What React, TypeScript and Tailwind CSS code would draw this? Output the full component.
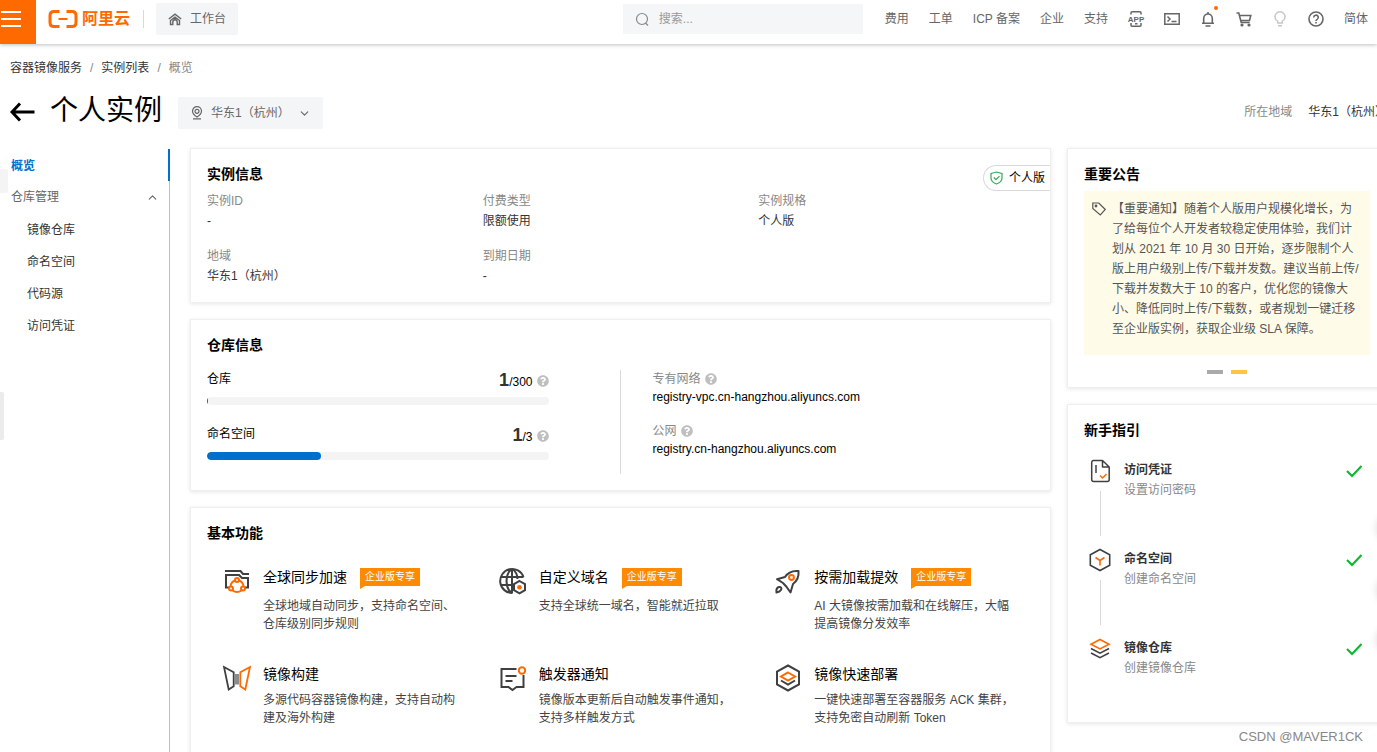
import type { ReactNode } from 'react';
import { FaQuestionCircle } from 'react-icons/fa';
import { ChevronDown, ChevronUp } from 'lucide-react';

const NAV_LINKS = ['费用', '工单', 'ICP 备案', '企业', '支持'];
const SIDE_LINKS = ['镜像仓库', '命名空间', '代码源', '访问凭证'];

const INSTANCE_INFO = [
    { label: '实例ID', value: '-' },
    { label: '付费类型', value: '限额使用' },
    { label: '实例规格', value: '个人版' },
    { label: '地域', value: '华东1（杭州）' },
    { label: '到期日期', value: '-' },
];

const QUOTAS = [
    { label: '仓库', used: 1, total: 300 },
    { label: '命名空间', used: 1, total: 3 },
];

const ENDPOINTS = [
    { label: '专有网络', host: 'registry-vpc.cn-hangzhou.aliyuncs.com' },
    { label: '公网', host: 'registry.cn-hangzhou.aliyuncs.com' },
];

interface Feature {
    title: string;
    desc: string;
    icon: ReactNode;
    enterprise?: boolean;
}

interface Step {
    title: string;
    desc: string;
    icon: ReactNode;
}

/* ---------- icons ---------- */

const SyncIcon = () => (
    <svg width="28" height="28" viewBox="0 0 28 28" fill="none" stroke="#404040" strokeWidth="2">
        <path d="M2 4h15.500l2.500 3H26" />
        <path d="M6 20.500H3V8h13l3 3h6v9.500h-3" />
        <g stroke="#ff6a00">
            <path d="M12 13.500a7 7 0 0 0-4.500 5.500M16 13.500a7 7 0 0 1 4.500 5.500M9.500 23.500q4.500 3 9 0" />
            <circle cx="14" cy="13" r="2" />
            <circle cx="8" cy="21.500" r="2" />
            <circle cx="20" cy="21.500" r="2" />
        </g>
    </svg>
);

const GlobeIcon = () => (
    <svg width="28" height="28" viewBox="0 0 28 28" fill="none" stroke="#404040" strokeWidth="2">
        <path d="M24.500 10A12 12 0 1 0 13.500 26M2 10h22.500M2 18h11M12.500 2c-3.500 3-5 7-5 12s1.500 9 5 12M13.500 2c3.500 2.500 4.800 5.500 5 10M13 2v24" />
        <path d="M20.500 14l5.500 3.200v6l-5.500 3.200-5.500-3.200v-6z" fill="#fff" />
        <circle cx="20.500" cy="20.200" r="2.300" fill="#ff6a00" stroke="none" />
    </svg>
);

const RocketIcon = () => (
    <svg width="28" height="28" viewBox="0 0 28 28" fill="none" stroke="#404040" strokeWidth="2" strokeLinejoin="round">
        <path d="M24.500 4c-6-.5-10.500 1-13.500 6l-8 2.200 6 3.800 3.500 3.800 4 5.700 2.500-8.500C23.500 13.500 25 9 24.500 4z" />
        <path d="M2.500 25.500c-.5-3 .5-5 2.500-5.500 2-.3 3 1.500 2 3s-2.500 2.200-4.500 2.500z" />
        <circle cx="17.500" cy="10.500" r="2.400" stroke="#ff6a00" />
    </svg>
);

const MirrorIcon = () => (
    <svg width="28" height="28" viewBox="0 0 28 28" fill="none" stroke="#404040" strokeWidth="1.800">
        <path d="M1 3l9.700 5.200v14L5.700 25.500z" />
        <path d="M27 3l-9.700 5.200v14l5 3.300z" stroke="#ff6a00" />
        <path d="M13 10v10.500M15 10v10.500" strokeWidth="1.200" />
    </svg>
);

const TriggerIcon = () => (
    <svg width="28" height="28" viewBox="0 0 28 28" fill="none" stroke="#404040" strokeWidth="2">
        <path d="M17.500 5H2.500v18h7l4 3 4-3h7V11" />
        <path d="M6.500 12h11M6.500 17h7" />
        <circle cx="23" cy="6.500" r="3.200" stroke="#ff6a00" />
    </svg>
);

const DeployIcon = () => (
    <svg width="28" height="28" viewBox="0 0 28 28" fill="none" stroke="#404040" strokeWidth="2">
        <path d="M14 1.500l11 6v13l-11 6-11-6v-13z" />
        <path d="M14 8.500l7 4-7 4-7-4z" stroke="#ff6a00" />
        <path d="M7 16.500l7 4 7-4" />
    </svg>
);

const CredentialIcon = () => (
    <svg width="24" height="24" viewBox="0 0 24 24" fill="none" stroke="#404040" strokeWidth="1.500" strokeLinejoin="round">
        <path d="M14.500 1.500H5.200a2 2 0 0 0-1.500 2v17a2 2 0 0 0 2 2h13.500a2 2 0 0 0 2-2V8zM14.500 1.500V8h6.700M8 6v8" />
        <path d="M12 16.500l2.500 2.500 4-4" stroke="#ff6a00" />
    </svg>
);

const NamespaceIcon = () => (
    <svg width="24" height="24" viewBox="0 0 24 24" fill="none" stroke="#404040" strokeWidth="1.600">
        <path d="M12 1.500l9.700 5.200v10.600L12 22.500l-9.700-5.200V6.700z" />
        <path d="M7.500 9.500l4.500 3 4.500-3M12 12.500v5" stroke="#ff6a00" />
    </svg>
);

const LayersIcon = () => (
    <svg width="24" height="24" viewBox="0 0 24 24" fill="none" stroke="#404040" strokeWidth="1.600">
        <path d="M12 2.500l9 4.700-9 4.700-9-4.700z" stroke="#ff6a00" />
        <path d="M3 11.500l9 4.700 9-4.700M3 16l9 4.700 9-4.700" />
    </svg>
);

const Logo = () => (
    <svg width="30" height="20" viewBox="0 0 30 20" fill="none" stroke="#ff6a00" strokeWidth="3">
        <path d="M11.500 2.500H6Q2 2.500 2 6.500v7Q2 17.500 6 17.500h5.500M18.500 2.500H24Q28 2.500 28 6.500v7Q28 17.500 24 17.500h-5.500" />
        <path d="M10.500 10h9" strokeWidth="2" />
    </svg>
);

const HomeIcon = () => (
    <svg width="14" height="14" viewBox="0 0 14 14" fill="none" stroke="#666" strokeWidth="1.400">
        <path d="M.8 7L7 2.200 13.200 7" />
        <path d="M2.500 8.500v4h2.300V10a2.200 2.200 0 0 1 4.400 0v2.500h2.300v-4L7 5.200z" />
    </svg>
);

const HEADER_ICONS = [
    {
        name: 'App',
        icon: (
            <svg width="18" height="18" viewBox="0 0 18 18" fill="none" stroke="#666" strokeWidth="1.500">
                <path d="M4 4.500V2.700Q4 1.700 5 1.700h8q1 0 1 1v1.800M4 13v2.300q0 1 1 1h8q1 0 1-1V13M8 13.800h2.500" />
                <text x="9" y="11.500" textAnchor="middle" fontSize="8" fontWeight="700" fill="#666" stroke="none">APP</text>
            </svg>
        ),
    },
    {
        name: 'Cloud Shell',
        icon: (
            <svg width="16" height="16" viewBox="0 0 16 16" fill="none" stroke="#666" strokeWidth="1.500">
                <path d="M.8 2.800h14.400v10.400H.8zM3.500 5.500L6 8l-2.500 2.500M7.500 10.500h5" />
            </svg>
        ),
    },
    {
        name: '消息',
        dot: true,
        icon: (
            <svg width="16" height="16" viewBox="0 0 16 16" fill="none" stroke="#666" strokeWidth="1.600">
                <path d="M2 12.200h12M3.700 12V7.300a4.300 4.300 0 0 1 8.600 0V12M8 1v2M5.500 15h5" />
            </svg>
        ),
    },
    {
        name: '购物车',
        icon: (
            <svg width="16" height="16" viewBox="0 0 16 16" fill="none" stroke="#666" strokeWidth="1.600">
                <path d="M.5 2h2.300l2.400 9.500h8.500M3.500 4.500h11.300l-1.300 5H4.700" />
                <circle cx="6" cy="14" r=".8" />
                <circle cx="13" cy="14" r=".8" />
            </svg>
        ),
    },
    {
        name: '提示',
        icon: (
            <svg width="16" height="16" viewBox="0 0 16 16" fill="none" stroke="#c4c8cf" strokeWidth="1.500">
                <path d="M5.700 12V10.200a5 5 0 1 1 4.600 0V12zM6 14.800h4" />
            </svg>
        ),
    },
    {
        name: '帮助',
        icon: (
            <svg width="16" height="16" viewBox="0 0 16 16" fill="none" stroke="#666" strokeWidth="1.600">
                <circle cx="8" cy="8" r="7" />
                <path d="M5.700 6.500a2.300 2.300 0 1 1 3.500 1.900Q8 9 8 10M8 11v1.600" />
            </svg>
        ),
    },
];

const FEATURES: Feature[] = [
    { title: '全球同步加速', desc: '全球地域自动同步，支持命名空间、仓库级别同步规则', icon: <SyncIcon />, enterprise: true },
    { title: '自定义域名', desc: '支持全球统一域名，智能就近拉取', icon: <GlobeIcon />, enterprise: true },
    { title: '按需加载提效', desc: 'AI 大镜像按需加载和在线解压，大幅提高镜像分发效率', icon: <RocketIcon />, enterprise: true },
    { title: '镜像构建', desc: '多源代码容器镜像构建，支持自动构建及海外构建', icon: <MirrorIcon /> },
    { title: '触发器通知', desc: '镜像版本更新后自动触发事件通知，支持多样触发方式', icon: <TriggerIcon /> },
    { title: '镜像快速部署', desc: '一键快速部署至容器服务 ACK 集群，支持免密自动刷新 Token', icon: <DeployIcon /> },
];

const STEPS: Step[] = [
    { title: '访问凭证', desc: '设置访问密码', icon: <CredentialIcon /> },
    { title: '命名空间', desc: '创建命名空间', icon: <NamespaceIcon /> },
    { title: '镜像仓库', desc: '创建镜像仓库', icon: <LayersIcon /> },
];

/* ---------- building blocks ---------- */

function Card({ title, className = '', children }: { title: string; className?: string; children: ReactNode }) {
    return (
        <section className={`relative border border-[#efefef] bg-white px-4 pt-[15px] shadow-[0_1px_4px_rgba(0,0,0,0.1)] ${className}`}>
            <h2 className="text-sm leading-5 font-bold text-black">{title}</h2>
            {children}
        </section>
    );
}

function Header() {
    return (
        <header className="relative flex h-11 bg-white text-[#666] shadow-[0_1px_4px_rgba(0,0,0,0.25)]">
            <button aria-label="菜单" className="h-11 w-9 bg-[#ff6a00] pb-1.5 pl-px">
                <svg width="20" height="16" viewBox="0 0 20 16" stroke="#fff" strokeWidth="2">
                    <path d="M0 1h20M0 8h20M0 15h20" />
                </svg>
            </button>
            <div className="flex h-[38px] flex-1 items-center pr-[9px]">
                <a href="#" className="ml-3 flex items-center gap-1">
                    <Logo />
                    <span className="text-base leading-5 font-bold text-[#ff6a00]">阿里云</span>
                </a>
                <span className="ml-[13px] h-[18px] w-px bg-[#d9d9d9]" />
                <a href="#" className="ml-3 flex h-8 items-center gap-2 rounded-xs bg-[#f4f5f7] px-3">
                    <HomeIcon />
                    工作台
                </a>
                <label className="mr-[22px] ml-auto flex h-[30px] w-[240px] items-center gap-2 bg-[#f4f6f8] pl-3">
                    <svg width="16" height="16" viewBox="0 0 16 16" fill="none" stroke="#888" strokeWidth="1.200">
                        <circle cx="7" cy="8" r="5.500" />
                        <path d="M10.500 12l2.500 2.500" />
                    </svg>
                    <input type="search" aria-label="搜索" placeholder="搜索..." className="min-w-0 flex-1 outline-none placeholder:text-[#999]" />
                </label>
                <nav className="flex items-center gap-5">
                    {NAV_LINKS.map((link) => (
                        <a key={link} href="#">{link}</a>
                    ))}
                    {HEADER_ICONS.map(({ name, icon, dot }) => (
                        <button key={name} aria-label={name} className="relative flex h-4 w-4 items-center justify-center">
                            <span className="shrink-0">{icon}</span>
                            {dot && <span className="absolute -top-[5px] left-3.5 h-1 w-1 rounded-full bg-[#ff6a00]" />}
                        </button>
                    ))}
                    <a href="#">简体</a>
                </nav>
            </div>
        </header>
    );
}

function Sidebar() {
    return (
        <nav className="mt-px w-[170px] shrink-0 border-r border-[#bfbfbf] leading-[34px] text-[#333]">
            <a href="#" className="-mr-px block h-8 border-r-2 border-[#0070cc] pl-[11px] font-bold text-[#0070cc]">概览</a>
            <button className="flex h-8 w-full items-center justify-between pr-2.5 pl-[11px] text-[#666]">
                <span>仓库管理</span>
                <ChevronUp size={13} strokeWidth={2} />
            </button>
            {SIDE_LINKS.map((link) => (
                <a key={link} href="#" className="block h-8 pl-[27px]">{link}</a>
            ))}
        </nav>
    );
}

function InstanceCard() {
    return (
        <Card title="实例信息" className="pb-4">
            <dl className="mt-[7px] grid grid-cols-3 gap-y-[15px]">
                {INSTANCE_INFO.map(({ label, value }) => (
                    <div key={label}>
                        <dt className="text-[#888]">{label}</dt>
                        <dd>{value}</dd>
                    </div>
                ))}
            </dl>
            <div className="absolute top-4 right-0 flex h-[26px] items-center gap-1.5 rounded-l-full border border-r-0 border-[#d9d9d9] pr-[5px] pl-1.5 text-black">
                <svg width="13" height="14" viewBox="0 0 13 14" fill="none" stroke="#35a854" strokeWidth="1.200">
                    <path d="M1 2.500L6.500 1 12 2.500V7q0 4-5.500 6Q1 11 1 7zM3.800 6.500L6 8.700l3.500-3.500" />
                </svg>
                个人版
            </div>
        </Card>
    );
}

function RepositoryCard() {
    return (
        <Card title="仓库信息" className="pb-4">
            <div className="mt-[15px] flex">
                <div className="flex h-[104px] w-1/2 flex-col gap-4 border-r border-[#d9d9d9] pr-[71px]">
                    {QUOTAS.map(({ label, used, total }) => (
                        <div key={label}>
                            <div className="flex h-[18px] items-center justify-between text-black">
                                <span>{label}</span>
                                <span className="flex items-center gap-1 pt-1">
                                    <span>
                                        <b className="text-lg leading-5 text-[#333]">{used}</b>/{total}
                                    </span>
                                    <FaQuestionCircle size={12} className="text-[#bfbfbf]" />
                                </span>
                            </div>
                            <div
                                role="progressbar"
                                aria-label={label}
                                aria-valuenow={used}
                                aria-valuemax={total}
                                className="mt-[9px] mb-1 h-2 overflow-hidden rounded-full bg-[#f4f4f4]"
                            >
                                <div className="h-full rounded-full bg-[#0070cc]" style={{ width: `${(used / total) * 100}%` }} />
                            </div>
                        </div>
                    ))}
                </div>
                <dl className="flex flex-1 flex-col gap-4 pl-8 leading-[18px]">
                    {ENDPOINTS.map(({ label, host }) => (
                        <div key={label}>
                            <dt className="flex items-center gap-1 text-[#888]">
                                {label}
                                <FaQuestionCircle size={12} className="text-[#bfbfbf]" />
                            </dt>
                            <dd className="text-black">{host}</dd>
                        </div>
                    ))}
                </dl>
            </div>
        </Card>
    );
}

function FeatureCard() {
    return (
        <Card title="基本功能" className="flex-1 pb-12">
            <div className="mt-6 grid grid-cols-3 gap-y-[31px]">
                {FEATURES.map(({ title, desc, icon, enterprise }) => (
                    <div key={title} className="flex gap-3 pl-4">
                        <div className="shrink-0">{icon}</div>
                        <div className="w-[200px]">
                            <div className="flex">
                                <h3 className="text-sm leading-5 text-black">{title}</h3>
                                {enterprise && (
                                    <span className="relative mt-px mb-1 ml-[13px] h-[18px] bg-[#ff8a00] px-[5px] text-[10px] leading-[18px] text-white">
                                        企业版专享
                                        <svg width="5" height="3" viewBox="0 0 5 3" className="absolute top-full left-0">
                                            <path d="M0 0h5L0 3z" fill="#ff8a00" />
                                        </svg>
                                    </span>
                                )}
                            </div>
                            <p className="mt-[7px] leading-[18px] text-[#444]">{desc}</p>
                        </div>
                    </div>
                ))}
            </div>
        </Card>
    );
}

function NoticeCard() {
    return (
        <Card title="重要公告" className="pb-[13px]">
            <div className="mt-[7px] flex gap-1.5 bg-[#fffbe9] pt-2 pr-2 pb-4 pl-2 text-[#555]">
                <svg width="14" height="16" viewBox="0 0 14 16" fill="none" stroke="#555" strokeWidth="1.200" className="mt-0.5 shrink-0">
                    <path d="M.8 2h6l6.500 6.500-5 5.500L.8 7.500z" />
                    <circle cx="4" cy="5" r=".8" />
                </svg>
                <p>
                    【重要通知】随着个人版用户规模化增长，为了给每位个人开发者较稳定使用体验，我们计划从 2021 年 10 月 30
                    日开始，逐步限制个人版上用户级别上传/下载并发数。建议当前上传/下载并发数大于 10
                    的客户，优化您的镜像大小、降低同时上传/下载数，或者规划一键迁移至企业版实例，获取企业级 SLA 保障。
                </p>
            </div>
            <div className="mt-[15px] flex justify-center gap-2">
                <button aria-label="公告 1" className="h-1 w-4 bg-[#aaa]" />
                <button aria-label="公告 2" className="h-1 w-4 bg-[#ffc440]" />
            </div>
        </Card>
    );
}

function GuideCard() {
    return (
        <Card title="新手指引" className="pb-4">
            <ol className="mt-[19px]">
                {STEPS.map(({ title, desc, icon }, index) => (
                    <li key={title} className="flex h-[89px] gap-3 pr-2 pl-1 last:h-[69px]">
                        <div className="flex flex-col items-center gap-2">
                            {icon}
                            {index < STEPS.length - 1 && <span className="h-[45px] w-px bg-[#d9d9d9]" />}
                        </div>
                        <div className="flex-1 pt-px">
                            <h3 className="font-bold">{title}</h3>
                            <p className="text-[#888]">{desc}</p>
                        </div>
                        <svg width="16" height="24" viewBox="0 0 16 24" fill="none" stroke="#0ab82c" strokeWidth="2">
                            <path d="M1 12l5 5 9.500-10" />
                        </svg>
                    </li>
                ))}
            </ol>
        </Card>
    );
}

export default function App() {
    return (
        <div className="relative flex h-screen flex-col overflow-hidden bg-white font-['Liberation_Sans','Noto_Sans_CJK_SC',sans-serif] text-xs leading-5 text-[#333]">
            <Header />

            {/* the console body is slightly wider than the window and gets clipped on the right */}
            <div className="-mr-2.5 flex flex-1 flex-col">
                <nav className="mt-3.5 flex pl-2.5">
                    <a href="#">容器镜像服务</a>
                    <span className="px-2 text-[#888]">/</span>
                    <a href="#">实例列表</a>
                    <span className="px-2 text-[#888]">/</span>
                    <span className="text-[#888]">概览</span>
                </nav>

                <div className="mt-2 flex h-[62px] items-start pl-2.5">
                    <a href="#" aria-label="返回" className="mt-4">
                        <svg width="25" height="20" viewBox="0 0 25 20" fill="none" stroke="#000" strokeWidth="3">
                            <path d="M10 1.500L2 10l8 8.500M2 10h22.500" />
                        </svg>
                    </a>
                    <h1 className="ml-[15px] text-[28px] leading-[50px] text-black">个人实例</h1>
                    <button className="mt-[11px] ml-4 flex h-8 w-[145px] items-center rounded-xs bg-[#f4f5f7] px-3 text-[#666]">
                        <svg width="14" height="14" viewBox="0 0 14 14" fill="none" stroke="#666" strokeWidth="1.200">
                            <path d="M7 11Q2.500 8 2.500 5.200a4.500 4.500 0 0 1 9 0Q11.500 8 7 11zM3 12.800h8" />
                            <circle cx="7" cy="5.300" r="2" />
                        </svg>
                        <span className="ml-[7px]">华东1（杭州）</span>
                        <ChevronDown size={13} className="ml-auto" />
                    </button>
                    <div className="mt-4 ml-auto flex gap-4">
                        <span className="text-[#888]">所在地域</span>
                        <span>华东1（杭州）</span>
                    </div>
                </div>

                <div className="flex flex-1">
                    <Sidebar />
                    <main className="ml-5 flex min-w-0 flex-1 flex-col gap-4">
                        <InstanceCard />
                        <RepositoryCard />
                        <FeatureCard />
                    </main>
                    <aside className="ml-4 flex w-[320px] shrink-0 flex-col gap-4">
                        <NoticeCard />
                        <GuideCard />
                    </aside>
                </div>
            </div>

            {/* collapsed drawer handles */}
            <span className="absolute top-[169px] left-0 h-6 w-2 rounded-r-xs bg-[#f4f4f4]" />
            <span className="absolute top-[392px] left-0 h-12 w-1 rounded-r-xs bg-[#ebebeb]" />
            <span className="absolute top-[516px] left-full h-6 w-8 rounded-full shadow-[0_0_8px_rgba(0,0,0,0.15)]" />
            <span className="absolute top-[578px] left-full h-6 w-8 rounded-full shadow-[0_0_8px_rgba(0,0,0,0.15)]" />
            <span className="absolute top-[628px] left-full h-6 w-8 rounded-full shadow-[0_0_8px_rgba(0,0,0,0.15)]" />

            <span className="absolute right-3.5 bottom-[5px] text-[13px] text-[#888]">CSDN @MAVER1CK</span>
        </div>
    );
}
